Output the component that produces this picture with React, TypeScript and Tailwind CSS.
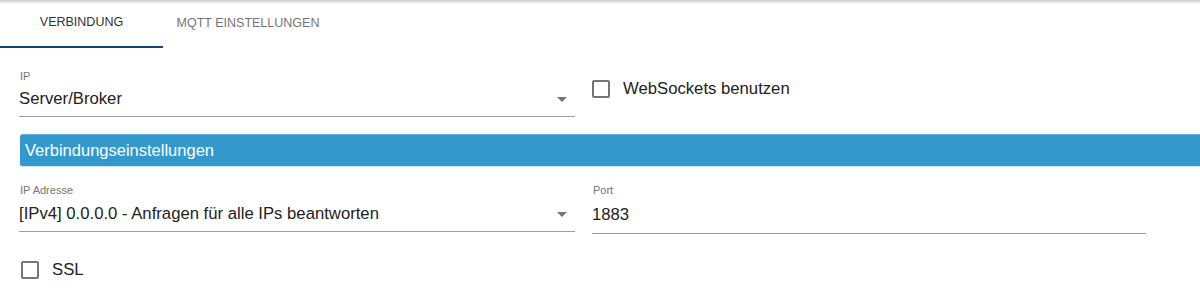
const Arrow = () => (
  <svg width="10" height="5" viewBox="0 0 10 5" className="shrink-0">
    <path d="M0 0 L10 0 L5 5 Z" fill="#757575" />
  </svg>
);

const Box = () => (
  <span className="w-[18px] h-[18px] shrink-0 rounded-[2px] border-2 border-[#757575] bg-white" />
);

const SelectField = ({ label, value, gap }: { label: string; value: string; gap: string }) => (
  <div className="flex flex-col">
    <span className="text-[11px] leading-[13px] text-[#757575] ml-[1px]">{label}</span>
    <div className={`flex items-center justify-between pb-[6px] border-b border-[#9e9e9e] pr-[8px] ${gap}`}>
      <span className="text-[16.7px] leading-[22px] text-[#222]">{value}</span>
      <Arrow />
    </div>
  </div>
);

const App = () => {
  return (
    <div className="w-[1200px] h-[303px] bg-white overflow-hidden font-['Liberation_Sans',Arial,sans-serif]">
      <div className="relative">
        <div className="absolute top-0 left-0 right-0 h-[4px] bg-gradient-to-b from-[#c8c8c8] to-transparent" />
        <div className="flex h-[48px]">
          <div className="w-[163px] flex items-center justify-center border-b-2 border-[#164477] text-[12.5px] text-[#333] pb-[2px]">
            VERBINDUNG
          </div>
          <div className="w-[170px] flex items-center justify-center text-[12.5px] text-[#757575] pb-[2px]">
            MQTT EINSTELLUNGEN
          </div>
        </div>
      </div>

      <div className="pl-[19px]">
        <div className="grid grid-cols-[556px_554px] gap-x-[17px] mt-[22px]">
          <SelectField label="IP" value="Server/Broker" gap="mt-[5px]" />
          <label className="flex items-center gap-[13px] self-start mt-[10px]">
            <Box />
            <span className="text-[16.7px] leading-[18px] text-[#222]">WebSockets benutzen</span>
          </label>
        </div>

        <div className="mt-[17px] h-[33px] flex items-center rounded-l-[3px] bg-[#3399cc] border-t border-[#5aaedb] border-b border-b-[#cfe7f4] pl-[5px] ml-[1px]">
          <span className="text-white text-[16.5px]">Verbindungseinstellungen</span>
        </div>

        <div className="grid grid-cols-[556px_554px] gap-x-[17px] mt-[17px]">
          <SelectField label="IP Adresse" value="[IPv4] 0.0.0.0 - Anfragen für alle IPs beantworten" gap="mt-[6px]" />
          <div className="flex flex-col">
            <span className="text-[11px] leading-[13px] text-[#757575] ml-[1px]">Port</span>
            <div className="mt-[6px] pb-[6px] border-b border-[#9e9e9e]">
              <span className="text-[16.7px] leading-[22px] text-[#222]">1883</span>
            </div>
          </div>
        </div>

        <label className="flex items-center gap-[13px] mt-[27px] ml-[2px]">
          <Box />
          <span className="text-[16.7px] leading-[18px] text-[#222]">SSL</span>
        </label>
      </div>
    </div>
  );
};

export default App;
